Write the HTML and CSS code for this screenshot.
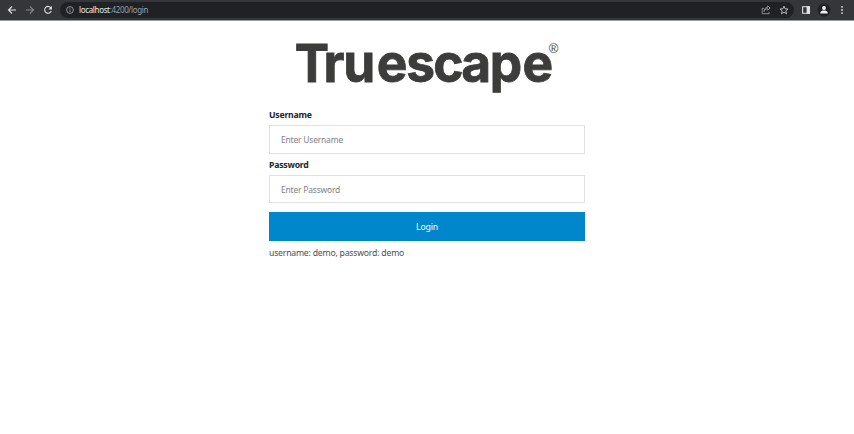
FILE: index.html
```
<!DOCTYPE html>
<html lang="en">
<head>
<meta charset="utf-8">
<title>Truescape</title>
<link rel="stylesheet" href="styles.css">
</head>
<body>
<header class="toolbar">
  <svg class="icon back" viewBox="0 0 10 10"><path d="M9 5H1.5M5 1.5L1.5 5L5 8.5"/></svg>
  <svg class="icon forward" viewBox="0 0 10 10"><path d="M1 5H8.5M5 1.5L8.5 5L5 8.5"/></svg>
  <svg class="icon reload" viewBox="0 0 10 10"><path d="M8 3.1A3.4 3.4 0 1 0 8.3 5.9"/><path class="solid" d="M8.9 .9V4.4H5.4Z"/></svg>
  <div class="address">
    <svg class="info" viewBox="0 0 10 10"><circle cx="5" cy="5" r="3.4"/><path d="M5 4.5V7M5 2.8V3.7"/></svg>
    <span class="url"><span class="host">localhost</span>:4200/login</span>
    <svg class="share" viewBox="0 0 10 10"><path d="M3 3.3H1.2V8.7H8V7M3.2 6.5C3.5 4.4 5 3.7 6.7 3.7V5.2L9.2 3L6.7 .9V2.4C4.4 2.5 3.2 4 3.2 6.5Z"/></svg>
    <svg class="star" viewBox="0 0 10 10"><path d="M5 1.1L6.1 3.8L9 4L6.8 5.9L7.5 8.8L5 7.2L2.5 8.8L3.2 5.9L1 4L3.9 3.8Z"/></svg>
  </div>
  <svg class="icon panel" viewBox="0 0 10 10"><path d="M1.6 1.8H8.4V8.2H1.6Z"/><path class="solid" d="M5.6 1.2H9V8.8H5.6Z"/></svg>
  <svg class="profile" viewBox="0 0 14 14"><circle class="disc" cx="7" cy="7" r="6.5"/><circle cx="7" cy="5" r="1.9"/><path d="M3.4 10.4V9.5C3.4 8 5.4 7.4 7 7.4S10.6 8 10.6 9.5V10.4Z"/></svg>
  <svg class="menu" viewBox="0 0 4 10"><circle cx="2" cy="1.9" r=".9"/><circle cx="2" cy="5" r=".9"/><circle cx="2" cy="8.1" r=".9"/></svg>
</header>
<main class="login">
  <svg class="logo" viewBox="0 0 316 60" role="img" aria-label="Truescape">
    <text class="word" transform="scale(.98 1)" x="26.3 55.7 75.8 110 140 167.5 196.2 225.2 258.6" y="44.6">Truescape</text>
    <text class="mark" x="279.7" y="15.5">®</text>
  </svg>
  <form class="form">
    <label for="user">Username</label>
    <input id="user" type="text" placeholder="Enter Username">
    <label for="pass">Password</label>
    <input id="pass" type="password" placeholder="Enter Password">
    <button type="button">Login</button>
  </form>
  <p class="hint">username: demo, password: demo</p>
</main>
</body>
</html>
```
FILE: styles.css
```
* { box-sizing: border-box; }
body {
  margin: 0;
  background: #fff;
  color: #212529;
  font-family: "Noto Sans", "Open Sans", sans-serif;
  font-size: 8.7px;
  line-height: 12px;
}
.toolbar {
  display: flex;
  align-items: center;
  height: 21px;
  padding: 0 10px 0 7px;
  background: #35363a;
  border-bottom: 1px solid #9b9b9c;
}
svg { display: block; flex: none; fill: none; stroke: #dfe1e5; stroke-width: 1.1; }
.icon { width: 10px; height: 10px; }
.solid { fill: #dfe1e5; stroke: none; }
.forward { margin-left: 8px; stroke: #85878b; }
.reload { margin-left: 8px; }
.address {
  display: flex;
  align-items: center;
  flex: 1;
  height: 16px;
  margin: 0 7px 0 7px;
  padding: 0 5px;
  border-radius: 8px;
  background: #202124;
}
.info { width: 10px; height: 10px; stroke: #aaadb2; stroke-width: .8; }
.url { margin: 0 auto 0 4px; color: #9aa0a6; font-size: 8px; letter-spacing: -.35px; }
.host { color: #e8eaed; }
.share { width: 10px; height: 10px; stroke: #a5a8ad; stroke-width: .8; }
.star { width: 10px; height: 10px; margin-left: 8px; stroke: #c5c8cc; stroke-width: .9; }
.profile { width: 14px; height: 14px; margin-left: 6px; fill: #f1f3f4; stroke: none; }
.disc { fill: #202124; }
.menu { width: 4px; height: 10px; margin-left: 9px; fill: #dfe1e5; stroke: none; }
.login { width: 316px; margin: 16px auto 0; }
.logo { width: 316px; height: 60px; overflow: visible; }
.logo text { fill: #3c3c3b; stroke: none; }
.logo .word { font-family: Inter, sans-serif; font-size: 52.5px; font-weight: 700; stroke: #3c3c3b; stroke-width: .8; }
.mark { font-family: "Liberation Sans", sans-serif; font-size: 13px; }
.form { display: flex; flex-direction: column; margin-top: 12px; }
label { margin-bottom: 4px; font-weight: 700; letter-spacing: -.22px; }
input {
  height: 29px;
  margin: 0 0 5px;
  padding: 0 11px;
  border: 1px solid #e1e1e1;
  border-radius: 0;
  font: inherit;
  font-size: 8.5px;
  letter-spacing: -.21px;
}
input[type="password"] { height: 28px; margin-bottom: 9px; padding-top: 1px; }
::placeholder { color: #7f8286; opacity: 1; }
button {
  height: 29px;
  padding: 1px 0 0;
  border: 0;
  background: #0086cb;
  color: #fff;
  font: inherit;
  letter-spacing: -.15px;
}
.hint { margin: 6px 0 0; color: #4b4f54; letter-spacing: -.22px; }
```
